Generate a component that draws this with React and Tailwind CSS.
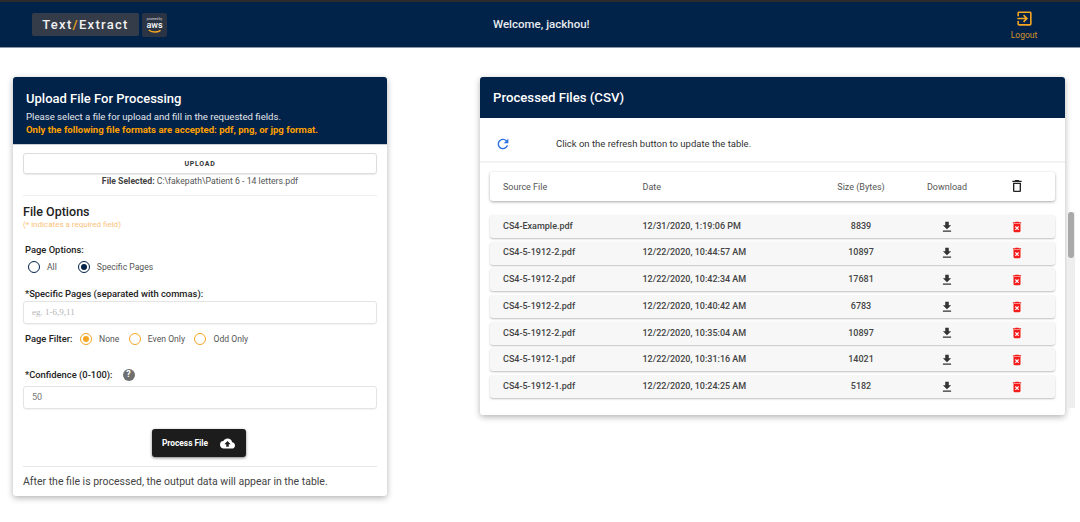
const FONT = "font-['Roboto','Liberation_Sans',sans-serif]";

const FILES = [
  ["CS4-Example.pdf", "12/31/2020, 1:19:06 PM", "8839"],
  ["CS4-5-1912-2.pdf", "12/22/2020, 10:44:57 AM", "10897"],
  ["CS4-5-1912-2.pdf", "12/22/2020, 10:42:34 AM", "17681"],
  ["CS4-5-1912-2.pdf", "12/22/2020, 10:40:42 AM", "6783"],
  ["CS4-5-1912-2.pdf", "12/22/2020, 10:35:04 AM", "10897"],
  ["CS4-5-1912-1.pdf", "12/22/2020, 10:31:16 AM", "14021"],
  ["CS4-5-1912-1.pdf", "12/22/2020, 10:24:25 AM", "5182"],
];

/* Material style glyphs */
function DownloadIcon() {
  return (
    <svg viewBox="0 0 24 24" className="w-[14px] h-[14px] fill-[#333]">
      <path d="M19 9h-4V3H9v6H5l7 7 7-7zM5 18v2h14v-2H5z" />
    </svg>
  );
}

function DeleteForeverIcon() {
  return (
    <svg viewBox="0 0 24 24" className="w-[14px] h-[14px] fill-[#f51a1a]">
      <path d="M6 19c0 1.1.9 2 2 2h8c1.1 0 2-.9 2-2V7H6v12zm2.46-7.12 1.41-1.41L12 12.59l2.12-2.12 1.41 1.41L13.41 14l2.12 2.12-1.41 1.41L12 15.41l-2.12 2.12-1.41-1.41L10.59 14l-2.13-2.12zM15.5 4l-1-1h-5l-1 1H5v2h14V4z" />
    </svg>
  );
}

function TrashOutlineIcon() {
  return (
    <svg viewBox="0 0 24 24" className="w-[16px] h-[16px] fill-[#222]">
      <path d="M6 19c0 1.1.9 2 2 2h8c1.1 0 2-.9 2-2V7H6v12zM8 9h8v10H8V9zm7.5-5-1-1h-5l-1 1H5v2h14V4z" />
    </svg>
  );
}

function RefreshIcon() {
  return (
    <svg viewBox="0 0 24 24" className="w-[16px] h-[16px] fill-[#2a6fe0]">
      <path d="M17.65 6.35A7.958 7.958 0 0 0 12 4c-4.42 0-7.99 3.58-7.99 8s3.57 8 7.99 8c3.73 0 6.84-2.55 7.73-6h-2.08A5.99 5.99 0 0 1 12 18c-3.31 0-6-2.69-6-6s2.69-6 6-6c1.66 0 3.14.69 4.22 1.78L13 11h7V4l-2.35 2.35z" />
    </svg>
  );
}

function Radio({ label, checked, color }) {
  return (
    <span className="flex items-center gap-[7px]">
      <span
        className={`w-[12px] h-[12px] rounded-full border-[1.5px] flex items-center justify-center ${
          color === "orange" ? "border-[#f5a623]" : "border-[#012249]"
        }`}
      >
        {checked && (
          <span
            className={`w-[6px] h-[6px] rounded-full ${
              color === "orange" ? "bg-[#f5a623]" : "bg-[#012249]"
            }`}
          />
        )}
      </span>
      <span className="text-[8.6px] text-[#555]">{label}</span>
    </span>
  );
}

function UploadCard() {
  return (
    <section className="w-[374px] h-[419px] shrink-0 rounded-[3px] bg-white shadow-[0_2px_6px_rgba(0,0,0,0.3)] flex flex-col">
      <div className="h-[68px] bg-[#012249] rounded-t-[3px] px-[13px] pt-[13px] border-b border-[#c9ced6]">
        <h2 className="text-[13px] leading-[17px] font-medium text-white">Upload File For Processing</h2>
        <p className="mt-[4px] text-[9.6px] leading-[12.5px] text-[#e4e7ec]">
          Please select a file for upload and fill in the requested fields.
        </p>
        <p className="text-[9.6px] leading-[12.5px] font-bold text-[#ffa000]">
          Only the following file formats are accepted: pdf, png, or jpg format.
        </p>
      </div>

      <div className="flex-1 px-[10px] pt-[8px] flex flex-col">
        <button className="h-[21px] w-full shrink-0 pt-[1px] rounded-[3px] border border-[#ddd] shadow-[0_1px_1px_rgba(0,0,0,0.08)] text-[7px] font-bold tracking-[0.7px] text-[#333]">
          UPLOAD
        </button>
        <p className="mt-[1px] text-center text-[8.7px] leading-[12px] text-[#555]">
          <b className="font-bold text-[#444]">File Selected:</b> C:\fakepath\Patient 6 - 14 letters.pdf
        </p>
        <hr className="mt-[8px] border-[#eee]" />

        <h3 className="mt-[8px] text-[12.5px] leading-[15px] font-medium text-[#222]">File Options</h3>
        <p className="text-[8px] leading-[11px] text-[#fbc27a]">(* indicates a required field)</p>

        <p className="mt-[14px] ml-[2px] text-[9.4px] leading-[12px] font-medium text-[#222]">Page Options:</p>
        <div className="mt-[4px] ml-[5px] h-[14px] flex items-center gap-[21px]">
          <Radio label="All" checked={false} color="navy" />
          <Radio label="Specific Pages" checked color="navy" />
        </div>

        <p className="mt-[14px] ml-[2px] text-[9.4px] leading-[12px] font-medium text-[#222]">
          *Specific Pages (separated with commas):
        </p>
        <div className="mt-[1px] h-[23px] shrink-0 rounded-[3px] border border-[#e4e4e4] shadow-[0_1px_1px_rgba(0,0,0,0.05)] flex items-center px-[8px] text-[9px] text-[#b5b5b5] font-['Liberation_Serif',serif]">
          eg. 1-6,9,11
        </div>

        <div className="mt-[8px] ml-[2px] h-[14px] flex items-center">
          <span className="text-[9.4px] font-medium text-[#222] w-[55px]">Page Filter:</span>
          <span className="flex items-center gap-[9.5px]">
            <Radio label="None" checked color="orange" />
            <Radio label="Even Only" checked={false} color="orange" />
            <Radio label="Odd Only" checked={false} color="orange" />
          </span>
        </div>

        <div className="mt-[21px] ml-[2px] h-[16px] flex items-center gap-[10px]">
          <span className="text-[9.4px] font-medium text-[#222]">*Confidence (0-100):</span>
          <span className="w-[12px] h-[12px] rounded-full bg-[#6f6f6f] text-white text-[9px] font-bold flex items-center justify-center">?</span>
        </div>
        <div className="mt-[3px] h-[23px] shrink-0 rounded-[3px] border border-[#e4e4e4] shadow-[0_1px_1px_rgba(0,0,0,0.05)] flex items-center px-[8px] text-[9px] text-[#777]">
          50
        </div>

        <div className="mt-[20px] flex justify-center">
          <button className="w-[94px] h-[28px] ml-[-3px] rounded-[3px] bg-[#1c1c1c] shadow-[0_1px_3px_rgba(0,0,0,0.5)] flex items-center justify-center gap-[12px] text-[8.4px] font-bold text-white">
            Process File
            <svg viewBox="0 0 24 24" className="w-[15px] h-[15px] fill-white">
              <path d="M19.35 10.04A7.49 7.49 0 0 0 12 4C9.11 4 6.6 5.64 5.35 8.04A5.994 5.994 0 0 0 0 14c0 3.31 2.69 6 6 6h13c2.76 0 5-2.24 5-5 0-2.64-2.05-4.78-4.65-4.96zM14 13v4h-4v-4H7l5-5 5 5h-3z" />
            </svg>
          </button>
        </div>

        <hr className="mt-[9px] border-[#e8e8e8]" />
        <p className="mt-[7px] text-[10.5px] leading-[15px] text-[#444]">
          After the file is processed, the output data will appear in the table.
        </p>
      </div>
    </section>
  );
}

const COLS = "grid grid-cols-[139.5px_173px_91px_81px_1fr] items-center pl-[13px]";

function FilesCard() {
  return (
    <section className="w-[585px] h-[338px] shrink-0 rounded-[3px] bg-white shadow-[0_2px_6px_rgba(0,0,0,0.3)] flex flex-col">
      <div className="h-[41px] bg-[#012249] rounded-t-[3px] px-[13px] flex items-center">
        <h2 className="text-[13.2px] font-medium text-white">Processed Files (CSV)</h2>
      </div>

      <div className="h-[45px] pt-[9px] border-b-2 border-[#f2f2f2] flex items-center">
        <span className="ml-[15px] w-[16px] flex"><RefreshIcon /></span>
        <p className="ml-[45px] text-[9.5px] text-[#333]">Click on the refresh button to update the table.</p>
      </div>

      <div className="px-[10px] pt-[9px]">
        <div className={`${COLS} h-[29px] pt-[2px] rounded-[3px] bg-white shadow-[0_1px_3px_rgba(0,0,0,0.35)] text-[9px] text-[#555]`}>
          <span>Source File</span>
          <span>Date</span>
          <span className="text-center">Size (Bytes)</span>
          <span className="text-center">Download</span>
          <span className="pl-[21px] pb-[4px] flex"><TrashOutlineIcon /></span>
        </div>

        <div className="mt-[14px] flex flex-col gap-[3.7px]">
          {FILES.map((f, i) => (
            <div
              key={i}
              className={`${COLS} h-[23px] rounded-[3px] bg-[#f7f7f7] shadow-[0_1px_2px_rgba(0,0,0,0.25)] text-[9px] font-medium text-[#444]`}
            >
              <span>{f[0]}</span>
              <span>{f[1]}</span>
              <span className="text-center">{f[2]}</span>
              <span className="flex justify-center"><DownloadIcon /></span>
              <span className="pl-[22px] flex"><DeleteForeverIcon /></span>
            </div>
          ))}
        </div>
      </div>
    </section>
  );
}

export default function App() {
  return (
    <div className={`${FONT} w-[1080px] h-[522px] overflow-hidden bg-white`}>
      <header className="h-[48px] bg-[#012249] border-t-2 border-t-[#2b2b2b] border-b border-b-[#8d97a6] flex items-center pl-[32px]">
        <div className="w-[107px] h-[23px] rounded-[2px] bg-[#343c49] flex items-center justify-center text-[13px] font-medium tracking-[1.3px] text-[#f1f1f1]">
          Text<span className="text-[#f5a623]">/</span>Extract
        </div>
        <div className="ml-[3px] w-[25px] h-[24px] rounded-[2px] bg-[#2a3444] flex flex-col items-center justify-center">
          <span className="text-[3px] leading-[4px] text-[#ddd]">powered by</span>
          <span className="text-[9px] leading-[8px] font-medium text-white">aws</span>
          <svg viewBox="0 0 20 5" className="w-[14px] h-[4px]">
            <path d="M1 1c5 3.5 12 3.5 17 .5" fill="none" stroke="#f5a623" strokeWidth="2" />
          </svg>
        </div>
        <p className="ml-[326px] w-[100px] text-[11.5px] font-medium text-[#e8ebef] whitespace-nowrap">Welcome, jackhou!</p>
        <div className="ml-[411px] w-[40px] flex flex-col items-center">
          <svg viewBox="0 0 24 24" className="w-[19px] h-[19px] fill-[#f5a623]">
            <path d="M10.09 15.59 11.5 17l5-5-5-5-1.41 1.41L12.67 11H3v2h9.67l-2.58 2.59zM19 3H5c-1.11 0-2 .9-2 2v4h2V5h14v14H5v-4H3v4c0 1.1.89 2 2 2h14c1.1 0 2-.9 2-2V5c0-1.1-.9-2-2-2z" />
          </svg>
          <span className="text-[8.5px] leading-[12px] mt-[1px] text-[#d5942a]">Logout</span>
        </div>
      </header>

      <main className="flex items-start pl-[13px] pt-[29px]">
        <UploadCard />
        <div className="ml-[93px]">
          <FilesCard />
        </div>
        {/* table scrollbar, sits beside the card */}
        <div className="ml-[2px] w-[8px] h-[196px] mt-[135px] bg-[#eeeeee] pl-[1px]">
          <div className="w-[6px] h-[46px] rounded-[3px] bg-[#a9a9a9]" />
        </div>
      </main>
    </div>
  );
}
